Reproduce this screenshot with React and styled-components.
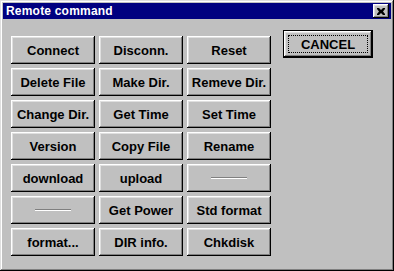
import React from "react";
import styled, { createGlobalStyle } from "styled-components";

const GlobalStyle = createGlobalStyle`
  html, body {
    margin: 0;
    padding: 0;
    background: #c0c0c0;
  }
  * {
    box-sizing: border-box;
  }
`;

const commands = [
  "Connect",
  "Disconn.",
  "Reset",
  "Delete File",
  "Make Dir.",
  "Remeve Dir.",
  "Change Dir.",
  "Get Time",
  "Set Time",
  "Version",
  "Copy File",
  "Rename",
  "download",
  "upload",
  null,
  null,
  "Get Power",
  "Std format",
  "format...",
  "DIR info.",
  "Chkdisk"
];

const App = () => {
  return (
    <>
      <GlobalStyle />
      <Window>
        <TitleBar>
          <Title>Remote command</Title>
          <CloseButton aria-label="Close">
            <svg width="8" height="7" viewBox="0 0 8 7">
              <path
                d="M0 0h2l2 2 2-2h2v1L6 3.5 8 6v1H6L4 5 2 7H0V6l2-2.5L0 1z"
                fill="#000"
              />
            </svg>
          </CloseButton>
        </TitleBar>
        <Body>
          <Grid>
            {commands.map((label, i) => (
              <CmdButton key={i}>{label ? label : <Dash />}</CmdButton>
            ))}
          </Grid>
          <CancelButton>
            <FocusRing>CANCEL</FocusRing>
          </CancelButton>
        </Body>
      </Window>
    </>
  );
};

const Window = styled.div`
  width: 394px;
  height: 271px;
  padding: 3px;
  background: #c0c0c0;
  box-shadow: inset -1px -1px #000, inset 1px 1px #dfdfdf,
    inset -2px -2px #808080, inset 2px 2px #fff;
  font-family: "Liberation Sans", Arial, sans-serif;
`;

const TitleBar = styled.div`
  height: 16px;
  background: #000080;
  display: flex;
  align-items: center;
  justify-content: space-between;
  padding: 0 2px 0 3px;
`;

const Title = styled.span`
  color: #fff;
  font-size: 12px;
  font-weight: 700;
  letter-spacing: 0.2px;
`;

const CloseButton = styled.div`
  width: 16px;
  height: 14px;
  background: #c0c0c0;
  display: flex;
  align-items: center;
  justify-content: center;
  box-shadow: inset -1px -1px #000, inset 1px 1px #fff,
    inset -2px -2px #808080, inset 2px 2px #dfdfdf;
`;

const Body = styled.div`
  display: flex;
  align-items: flex-start;
  padding: 11px 0 0 8px;
`;

const Grid = styled.div`
  margin-top: 6px;
  display: grid;
  grid-template-columns: repeat(3, 84px);
  grid-auto-rows: 28px;
  gap: 4px;
`;

const CmdButton = styled.div`
  display: flex;
  align-items: center;
  justify-content: center;
  background: #c0c0c0;
  color: #000;
  font-size: 13px;
  font-weight: 700;
  white-space: nowrap;
  box-shadow: inset -1px -1px #000, inset 1px 1px #fff,
    inset -2px -2px #808080, inset 2px 2px #dfdfdf;
`;

const Dash = styled.span`
  width: 36px;
  height: 2px;
  border-top: 1px solid #808080;
  border-bottom: 1px solid #fff;
`;

const CancelButton = styled.div`
  margin-left: 12px;
  width: 90px;
  height: 28px;
  padding: 4px;
  border: 1px solid #000;
  background: #c0c0c0;
  box-shadow: inset -1px -1px #000, inset 1px 1px #fff,
    inset -2px -2px #808080, inset 2px 2px #dfdfdf;
`;

const FocusRing = styled.div`
  height: 100%;
  border: 1px dotted #000;
  display: flex;
  align-items: center;
  justify-content: center;
  font-size: 13px;
  font-weight: 700;
  color: #000;
`;

export default App;
